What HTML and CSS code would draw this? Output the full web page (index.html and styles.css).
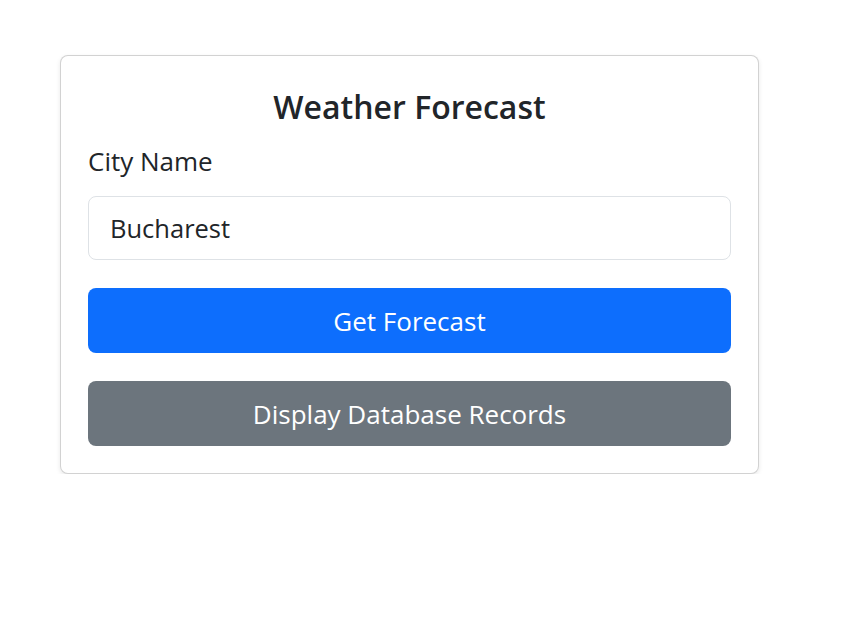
FILE: index.html
```html
<!DOCTYPE html>
<html lang="en">
<head>
<meta charset="utf-8">
<title>Weather Forecast</title>
<link rel="stylesheet" href="styles.css">
</head>
<body>
<div class="page">
  <div class="card">
    <h2 class="title">Weather Forecast</h2>
    <label class="label" for="city">City Name</label>
    <input class="input" id="city" type="text" value="Bucharest">
    <button class="btn btn-primary" type="button">Get Forecast</button>
    <button class="btn btn-secondary" type="button">Display Database Records</button>
  </div>
</div>
</body>
</html>
```

FILE: styles.css
```css
* { box-sizing: border-box; }
html, body { margin: 0; padding: 0; background: #fff; }
body {
  font-family: "Open Sans", "Noto Sans", sans-serif;
  color: #212529;
}
.page {
  padding: 55px 0 0 60px;
}
.card {
  width: 699px;
  border: 1px solid rgba(0,0,0,0.175);
  border-radius: 8px;
  box-shadow: 0 2px 5px rgba(0,0,0,0.09);
  padding: 32px 27px 27px;
  display: flex;
  flex-direction: column;
  background: #fff;
}
.title {
  margin: 0 0 16px;
  text-align: center;
  font-size: 32px;
  font-weight: 600;
  line-height: 1.2;
}
.label {
  font-size: 26px;
  line-height: 1.5;
  margin-bottom: 15px;
}
.input {
  height: 64px;
  border: 1px solid #dee2e6;
  border-radius: 8px;
  padding: 0 21px;
  font-family: inherit;
  font-size: 25.5px;
  color: #212529;
  margin-bottom: 28px;
  outline: none;
}
.btn {
  height: 65px;
  border: none;
  border-radius: 8px;
  font-family: inherit;
  font-size: 26px;
  color: #fff;
  cursor: pointer;
}
.btn-primary { background: #0d6efd; margin-bottom: 28px; }
.btn-secondary { background: #6c757d; }
```
